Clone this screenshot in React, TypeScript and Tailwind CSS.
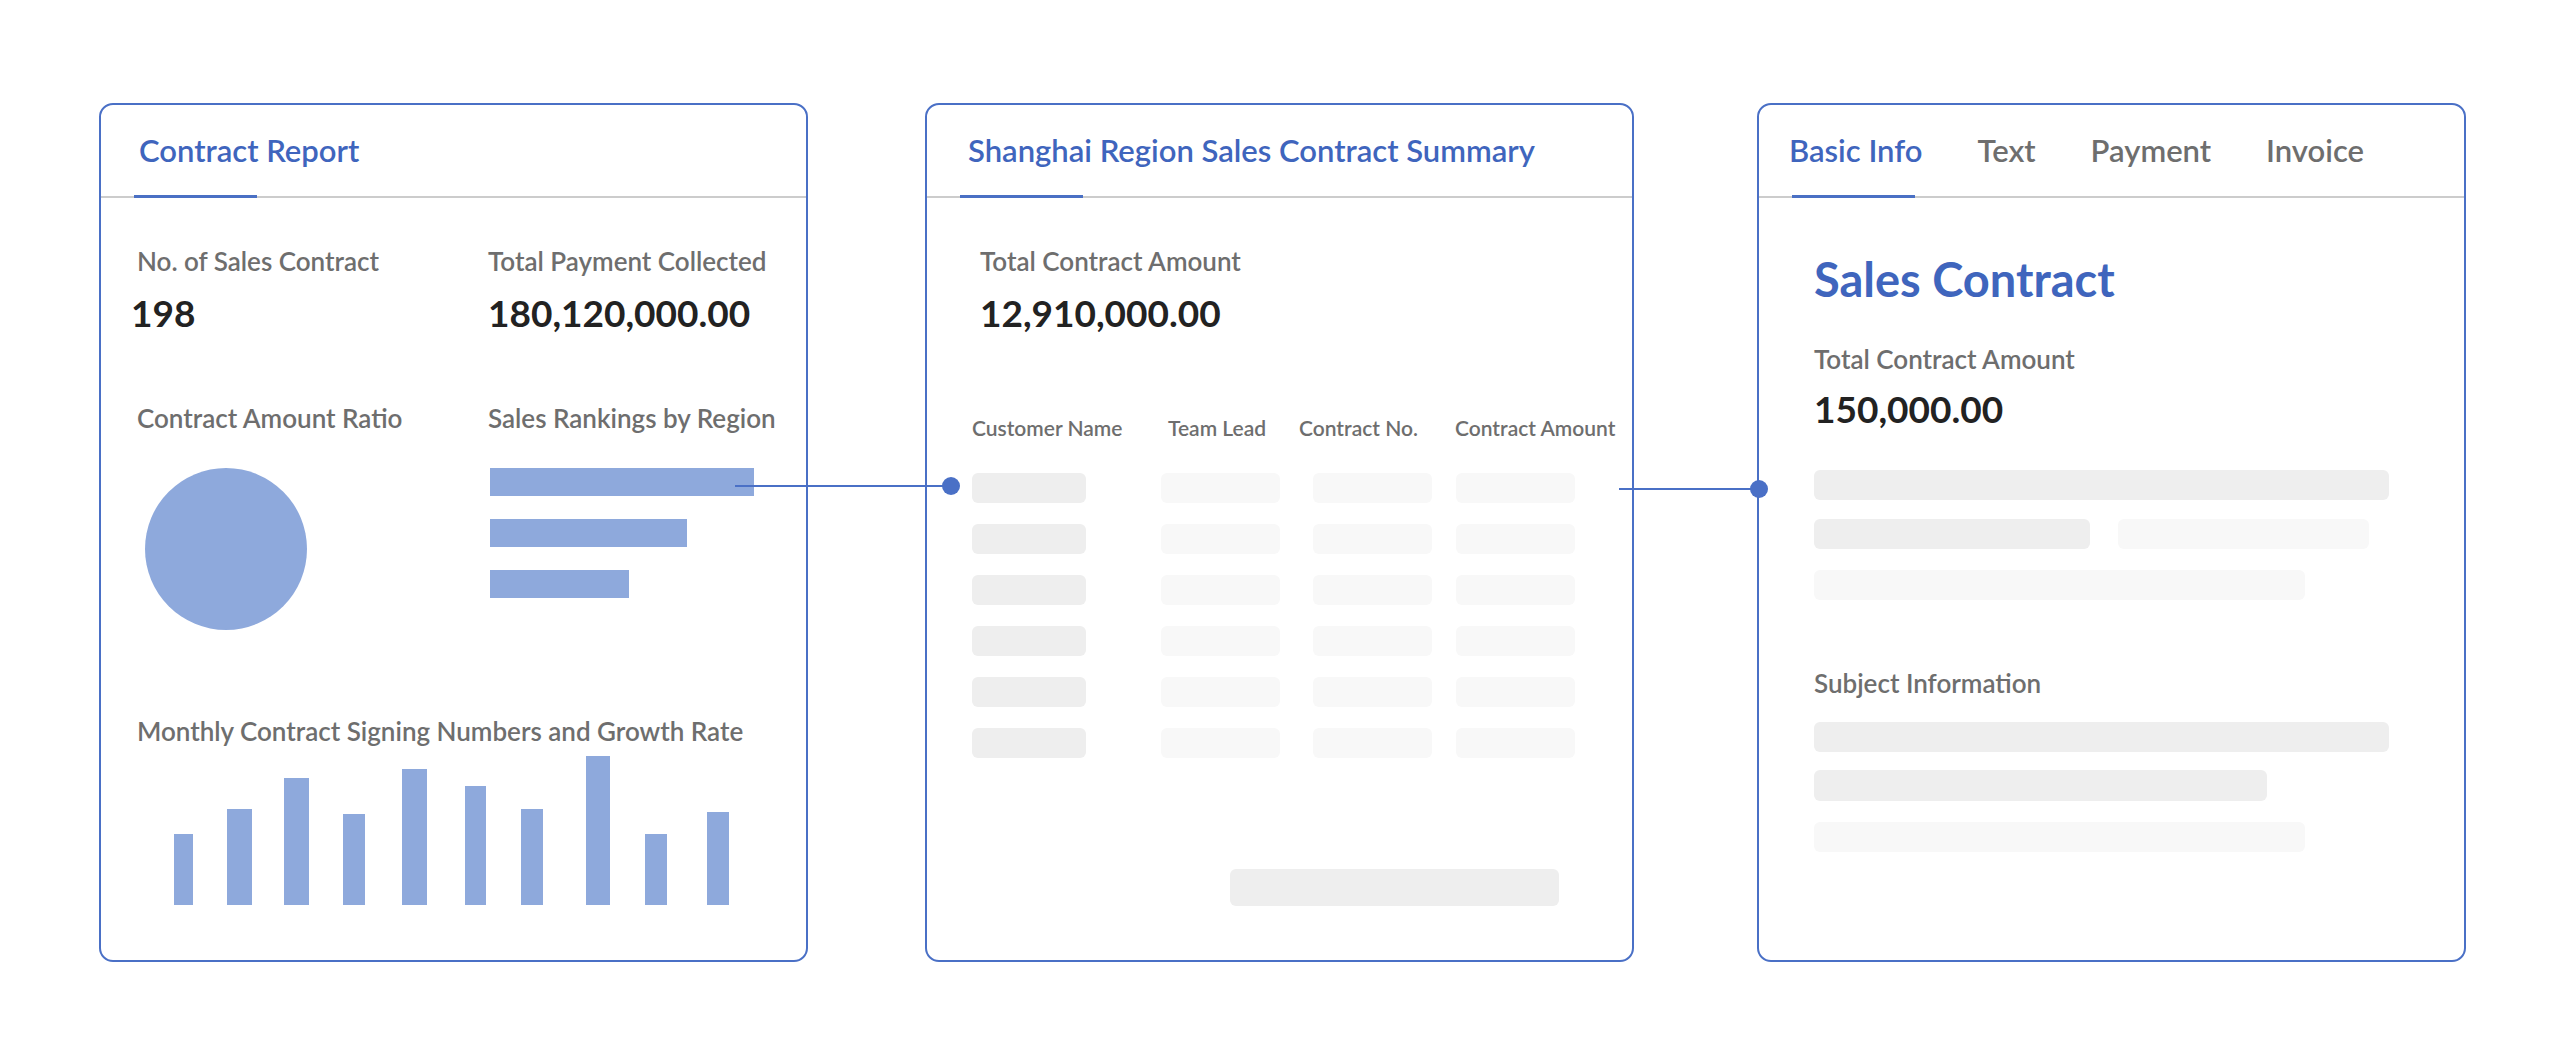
import React from "react";

const blue = "text-[#3f65bd]";

// monthly signing numbers, bar geometry in px
const monthly = [
  { h: "h-[71px]", w: "w-[19px]", ml: "ml-[37px]" },
  { h: "h-[96px]", w: "w-[25px]", ml: "ml-[34px]" },
  { h: "h-[127px]", w: "w-[25px]", ml: "ml-[32px]" },
  { h: "h-[91px]", w: "w-[22px]", ml: "ml-[34px]" },
  { h: "h-[136px]", w: "w-[25px]", ml: "ml-[37px]" },
  { h: "h-[119px]", w: "w-[21px]", ml: "ml-[38px]" },
  { h: "h-[96px]", w: "w-[22px]", ml: "ml-[35px]" },
  { h: "h-[149px]", w: "w-[24px]", ml: "ml-[43px]" },
  { h: "h-[71px]", w: "w-[22px]", ml: "ml-[35px]" },
  { h: "h-[93px]", w: "w-[22px]", ml: "ml-[40px]" },
];

const Label = ({ children, className = "" }: { children: React.ReactNode; className?: string }) => (
  <div className={`text-[26px] leading-[30px] font-semibold text-[#6e6e6e] ${className}`}>{children}</div>
);

const Value = ({ children, className = "" }: { children: React.ReactNode; className?: string }) => (
  <div className={`text-[37px] leading-[44px] font-bold text-[#222] ${className}`}>{children}</div>
);

function PanelHeader({ children, pl }: { children: React.ReactNode; pl: string }) {
  return (
    <div className={`relative h-[93px] flex items-center border-b-2 border-[#cccccc] ${pl}`}>
      {children}
      <span className="absolute left-[33px] -bottom-[2px] h-[3px] w-[123px] bg-[#4a70c4]" />
    </div>
  );
}

const panel = "w-[709px] h-[859px] shrink-0 rounded-[14px] border-2 border-[#4a70c6] bg-white overflow-hidden";

function ContractReport() {
  return (
    <div className={panel}>
      <PanelHeader pl="pl-[38px]">
        <span className={`text-[31px] font-semibold ${blue}`}>Contract Report</span>
      </PanelHeader>

      <div className="pl-[36px]">
        <div className="grid grid-cols-[351px_1fr] pt-[48px]">
          <div>
            <Label>No. of Sales Contract</Label>
            <Value className="mt-[15px] -ml-[6px]">198</Value>
          </div>
          <div>
            <Label>Total Payment Collected</Label>
            <Value className="mt-[15px]">180,120,000.00</Value>
          </div>
        </div>

        <div className="grid grid-cols-[351px_1fr] mt-[68px]">
          <div>
            <Label>Contract Amount Ratio</Label>
            <div className="mt-[35px] ml-[8px] size-[162px] rounded-full bg-[#8ea9dc]" />
          </div>
          <div>
            <Label>Sales Rankings by Region</Label>
            <div className="mt-[35px] ml-[2px] flex flex-col gap-[23px]">
              <div className="h-[28px] w-[264px] bg-[#8ea9dc]" />
              <div className="h-[28px] w-[197px] bg-[#8ea9dc]" />
              <div className="h-[28px] w-[139px] bg-[#8ea9dc]" />
            </div>
          </div>
        </div>

        <Label className="mt-[86px]">Monthly Contract Signing Numbers and Growth Rate</Label>
        <div className="flex items-end h-[149px] mt-[10px]">
          {monthly.map((b, i) => (
            <div key={i} className={`${b.h} ${b.w} ${b.ml} bg-[#8ea9dc]`} />
          ))}
        </div>
      </div>
    </div>
  );
}

function RegionSummary() {
  const rows = [0, 1, 2, 3, 4, 5];
  return (
    <div className={panel}>
      <PanelHeader pl="pl-[41px]">
        <span className={`text-[31px] font-semibold ${blue}`}>Shanghai Region Sales Contract Summary</span>
      </PanelHeader>

      <div className="pl-[45px]">
        <div className="ml-[8px] pt-[48px]">
          <Label>Total Contract Amount</Label>
          <Value className="mt-[15px]">12,910,000.00</Value>
        </div>

        <div className="flex mt-[80px] text-[21px] leading-[26px] font-semibold text-[#6e6e6e]">
          <span className="w-[196px]">Customer Name</span>
          <span className="w-[131px]">Team Lead</span>
          <span className="w-[156px]">Contract No.</span>
          <span>Contract Amount</span>
        </div>

        <div className="mt-[32px] flex flex-col gap-[21px]">
          {rows.map((r) => (
            <div key={r} className="flex h-[30px]">
              <div className="w-[114px] rounded-[6px] bg-[#eeeeee]" />
              <div className="ml-[75px] w-[119px] rounded-[6px] bg-[#f8f8f8]" />
              <div className="ml-[33px] w-[119px] rounded-[6px] bg-[#f8f8f8]" />
              <div className="ml-[24px] w-[119px] rounded-[6px] bg-[#f8f8f8]" />
            </div>
          ))}
        </div>

        <div className="mt-[111px] ml-[258px] h-[37px] w-[329px] rounded-[6px] bg-[#eeeeee]" />
      </div>
    </div>
  );
}

function ContractDetail() {
  const tabs = ["Text", "Payment", "Invoice"];
  return (
    <div className={panel}>
      <PanelHeader pl="pl-[30px]">
        <div className="flex gap-[55px] text-[31px] font-semibold">
          <span className={blue}>Basic Info</span>
          {tabs.map((t) => (
            <span key={t} className="text-[#6e6e6e]">{t}</span>
          ))}
        </div>
      </PanelHeader>

      <div className="pl-[55px] pt-[53px]">
        <div className={`text-[47px] leading-[56px] font-bold ${blue}`}>Sales Contract</div>
        <Label className="mt-[37px]">Total Contract Amount</Label>
        <Value className="mt-[13px]">150,000.00</Value>

        <div className="mt-[39px] h-[30px] w-[575px] rounded-[6px] bg-[#eeeeee]" />
        <div className="mt-[19px] flex h-[30px]">
          <div className="w-[276px] rounded-[6px] bg-[#eeeeee]" />
          <div className="ml-[28px] w-[251px] rounded-[6px] bg-[#f8f8f8]" />
        </div>
        <div className="mt-[21px] h-[30px] w-[491px] rounded-[6px] bg-[#f8f8f8]" />

        <Label className="mt-[68px]">Subject Information</Label>
        <div className="mt-[24px] h-[30px] w-[575px] rounded-[6px] bg-[#eeeeee]" />
        <div className="mt-[18px] h-[31px] w-[453px] rounded-[6px] bg-[#eeeeee]" />
        <div className="mt-[21px] h-[30px] w-[491px] rounded-[6px] bg-[#f8f8f8]" />
      </div>
    </div>
  );
}

export default function App() {
  return (
    <div className="relative w-[2560px] h-[1061px] bg-white font-['Lato',sans-serif]">
      <div className="flex pl-[99px] pt-[103px]">
        <ContractReport />
        <div className="w-[117px] shrink-0" />
        <RegionSummary />
        <div className="w-[123px] shrink-0" />
        <ContractDetail />
      </div>

      {/* links between the panels */}
      <div className="absolute left-[735px] top-[485px] h-[2px] w-[216px] bg-[#4a70c6]" />
      <div className="absolute left-[942px] top-[477px] size-[18px] rounded-full bg-[#4a70c6]" />
      <div className="absolute left-[1619px] top-[488px] h-[2px] w-[140px] bg-[#4a70c6]" />
      <div className="absolute left-[1750px] top-[480px] size-[18px] rounded-full bg-[#4a70c6]" />
    </div>
  );
}
